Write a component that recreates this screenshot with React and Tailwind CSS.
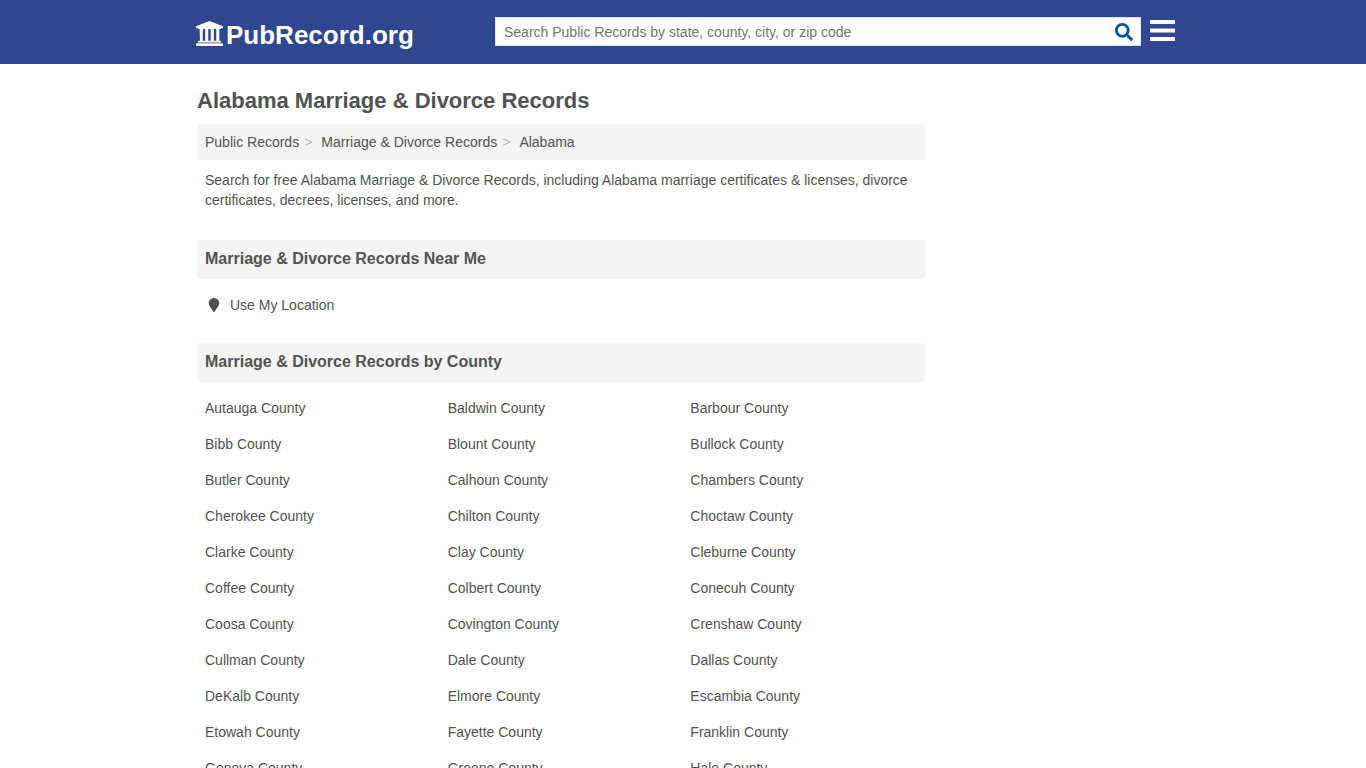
import { FaSearch, FaMapMarker } from "react-icons/fa";

const counties = [
  "Autauga", "Baldwin", "Barbour",
  "Bibb", "Blount", "Bullock",
  "Butler", "Calhoun", "Chambers",
  "Cherokee", "Chilton", "Choctaw",
  "Clarke", "Clay", "Cleburne",
  "Coffee", "Colbert", "Conecuh",
  "Coosa", "Covington", "Crenshaw",
  "Cullman", "Dale", "Dallas",
  "DeKalb", "Elmore", "Escambia",
  "Etowah", "Fayette", "Franklin",
  "Geneva", "Greene", "Hale",
];

const LogoIcon = () => {
  return (
    <svg className="w-[27px] h-[25px] mr-[3px] mb-[3px]" viewBox="0 0 1920 1792" fill="currentColor" aria-hidden="true">
      <path d="M960 0l960 384v128h-128q0 26-20.5 45t-48.5 19h-1526q-28 0-48.5-19t-20.5-45h-128v-128zm-704 640v-80h220v848h176v-848h220v848h176v-848h220v848h176v-848h220v848h59q28 0 48.5 19t20.5 45v64h-1664v-64q0-26 20.5-45t48.5-19h79zm1595 960q28 0 48.5 19t20.5 45v128h-1920v-128q0-26 20.5-45t48.5-19z" />
    </svg>
  );
};

const Header = () => {
  return (
    <header className="bg-[#2e4790]">
      <div className="max-w-[988px] mx-auto h-16 pl-[7px] pr-[2px] flex items-start justify-between">
        <a href="#" className="flex items-center pt-4 text-white text-[26px] leading-[38px] font-bold">
          <LogoIcon />
          PubRecord.org
        </a>
        <div className="flex items-start gap-[9px] pt-[17px]">
          <form className="flex w-[646px] h-[29px] bg-white border border-[#dce6f5]" onSubmit={(e) => e.preventDefault()}>
            <input
              type="text"
              aria-label="Search Public Records"
              placeholder="Search Public Records by state, county, city, or zip code"
              className="flex-1 px-2 text-sm outline-none placeholder:text-[#757575]"
            />
            <button type="submit" aria-label="Search" className="px-[7px] text-[#0b55a0]">
              <FaSearch className="w-[18px] h-[18px]" />
            </button>
          </form>
          <button type="button" aria-label="Menu" className="pt-[3px]">
            <svg className="w-[25px] h-[22px]" viewBox="0 0 25 22" fill="white">
              <rect width="25" height="4" rx="0.5" />
              <rect y="8.5" width="25" height="4" rx="0.5" />
              <rect y="17" width="25" height="4" rx="0.5" />
            </svg>
          </button>
        </div>
      </div>
    </header>
  );
};

const Separator = () => {
  return <span className="text-[#bbbbbb] ml-[5px] mr-[9px]">&gt;</span>;
};

const SectionTitle = ({ children }) => {
  return (
    <h2 className="bg-[#f4f4f4] rounded px-2 pt-[9px] pb-[10px] text-base leading-5 font-bold">{children}</h2>
  );
};

const App = () => {
  return (
    <div className="h-screen overflow-hidden bg-white text-sm leading-5 text-[#525252] font-['Liberation_Sans',Arial,sans-serif]">
      <Header />
      <div className="max-w-[988px] mx-auto px-2 pt-[21px]">
        <main className="max-w-[728px]">
          <h1 className="text-[22px] leading-8 font-bold mb-[7px]">Alabama Marriage &amp; Divorce Records</h1>

          <nav aria-label="Breadcrumb" className="bg-[#f4f4f4] rounded p-2">
            <ol className="flex">
              <li className="flex">
                <a href="#">Public Records</a>
                <Separator />
              </li>
              <li className="flex">
                <a href="#">Marriage &amp; Divorce Records</a>
                <Separator />
              </li>
              <li>Alabama</li>
            </ol>
          </nav>
          <p className="px-2 pt-[10px] mb-[30px]">
            Search for free Alabama Marriage &amp; Divorce Records, including Alabama marriage certificates &amp; licenses, divorce certificates, decrees, licenses, and more.
          </p>

          <SectionTitle>Marriage &amp; Divorce Records Near Me</SectionTitle>
          <div className="px-2 pt-4 mb-7">
            <a href="#" className="flex items-center">
              <FaMapMarker className="w-[18px] h-[14px] mr-[7px]" />
              Use My Location
            </a>
          </div>

          <SectionTitle>Marriage &amp; Divorce Records by County</SectionTitle>
          <ul className="grid grid-cols-3 gap-y-4 pt-4">
            {counties.map((county) => (
              <li key={county} className="px-2">
                <a href="#">{county} County</a>
              </li>
            ))}
          </ul>
        </main>
      </div>
    </div>
  );
};

export default App;
